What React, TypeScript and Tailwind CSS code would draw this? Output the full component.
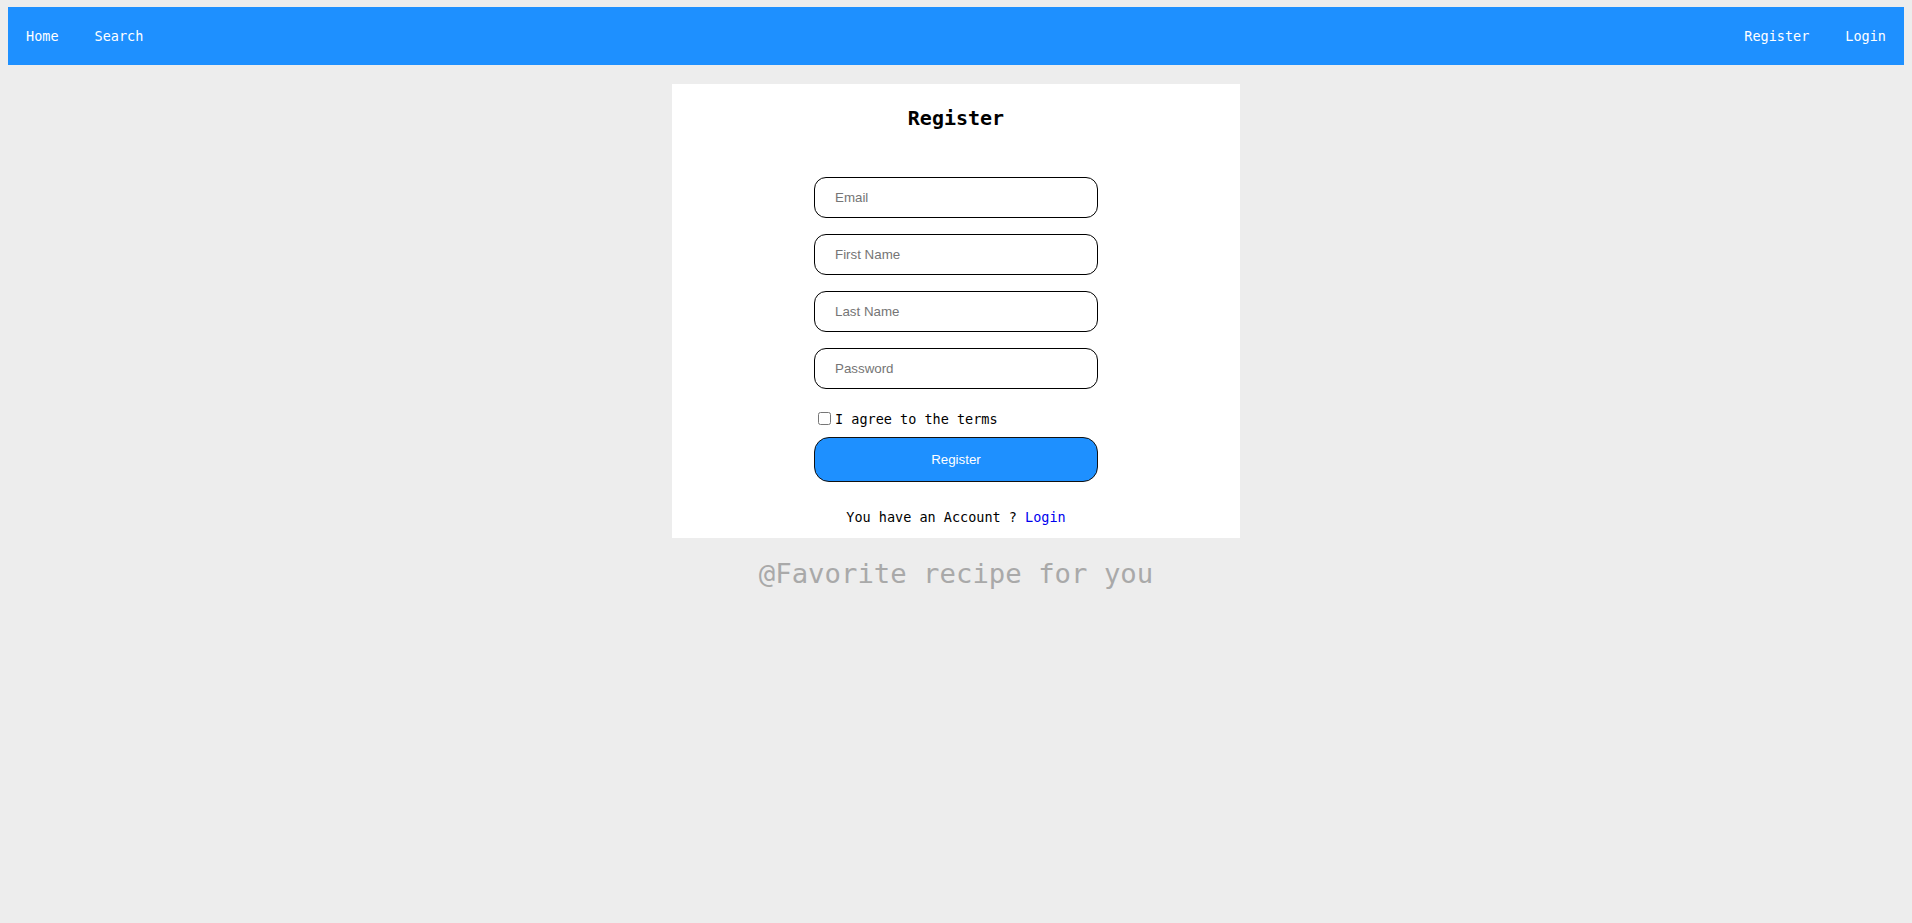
import React from "react";

const mono = "font-['DejaVu_Sans_Mono','Liberation_Mono',monospace]";
const sans = "font-['Liberation_Sans',Arial,sans-serif]";

function Field({ placeholder, type = "text" }: { placeholder: string; type?: string }) {
  return (
    <input
      type={type}
      placeholder={placeholder}
      className={`${sans} box-border h-[41px] w-[284px] rounded-[12px] border border-black bg-white pl-[20px] text-[13.33px] text-black outline-none placeholder:text-[#757575]`}
    />
  );
}

export default function App() {
  return (
    <div className="min-h-screen w-full bg-[#ededed] px-2 pt-[7px]">
      <nav className={`${mono} flex h-[58px] items-center justify-between bg-[#1e90ff] text-[13.5px] text-white`}>
        <div className="flex">
          <a className="px-[18px]">Home</a>
          <a className="px-[18px]">Search</a>
        </div>
        <div className="flex">
          <a className="px-[18px]">Register</a>
          <a className="px-[18px]">Login</a>
        </div>
      </nav>

      <div className="mx-auto mt-[19px] flex w-[568px] flex-col items-center bg-white pb-[11px] pt-[22px]">
        <h2 className={`${mono} text-[20px] font-bold leading-[24px] text-black`}>Register</h2>
        <div className="mt-[47px] flex w-[284px] flex-col gap-[16px]">
          <Field placeholder="Email" type="email" />
          <Field placeholder="First Name" />
          <Field placeholder="Last Name" />
          <Field placeholder="Password" type="password" />
        </div>
        <label className={`${mono} mt-[19px] flex h-[21px] w-[284px] items-center text-[13.5px] text-black`}>
          <input type="checkbox" className="ml-[4px] mr-[4px] h-[13px] w-[13px]" />
          <span className="mt-[2px] leading-[21px]">I agree to the terms</span>
        </label>
        <button
          className={`${sans} mt-[8px] h-[45px] w-[284px] rounded-[15px] border border-[#111] bg-[#1e90ff] text-[13.33px] text-white`}
        >
          Register
        </button>
        <p className={`${mono} mt-[25px] text-[13.5px] leading-[20px] text-black`}>
          You have an Account ? <a className="text-[#0000ee]">Login</a>
        </p>
      </div>

      <p className={`${mono} mt-[20px] text-center text-[27.3px] leading-[32px] text-[#a9a9a9]`}>
        @Favorite recipe for you
      </p>
    </div>
  );
}
